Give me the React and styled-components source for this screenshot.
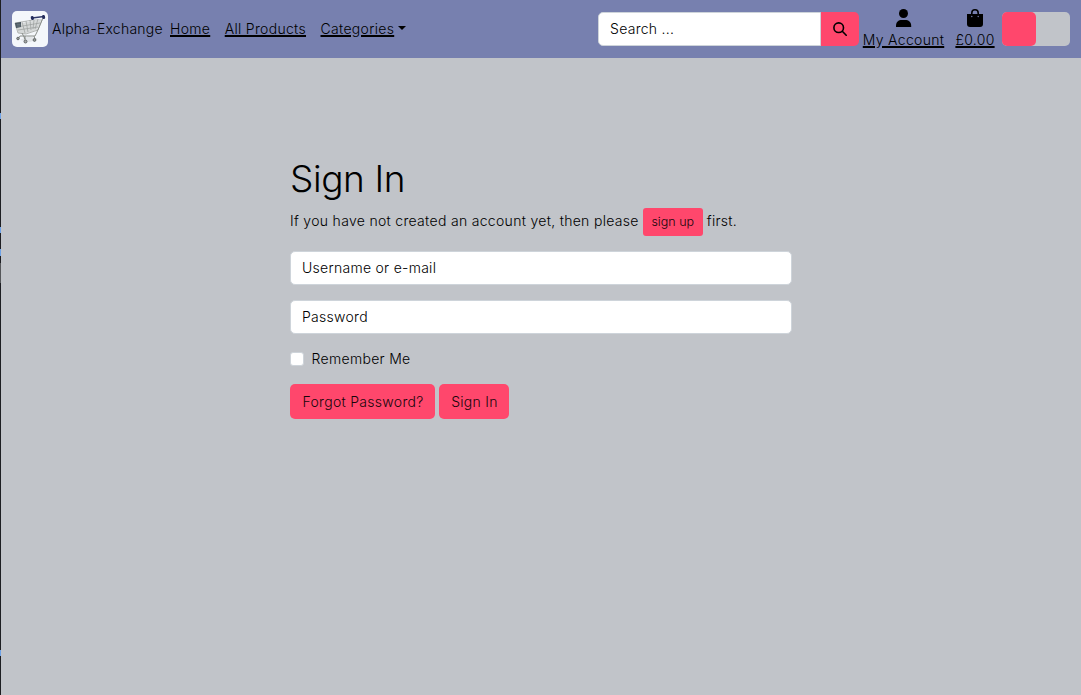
import React from "react";
import styled, { createGlobalStyle } from "styled-components";

const GlobalStyle = createGlobalStyle`
  *, *::before, *::after { box-sizing: border-box; }
  body {
    margin: 0;
    background: #c1c4c9;
    color: #000;
    font: 300 14px/21px Inter, "Liberation Sans", sans-serif;
    letter-spacing: 0.31px;
  }
`;

const Window = styled.div`
  display: flex;
  height: 695px;
  overflow: hidden;
`;

const WindowEdge = styled.div`
  flex: 0 0 1px;
  background: linear-gradient(
    #1d1e22 0 113px, #6fa3e8 113px 119px,
    #1d1e22 119px 227px, #6fa3e8 227px 233px,
    #1d1e22 233px 249px, #6fa3e8 249px 256px,
    #1d1e22 256px 263px, #55575a 263px 283px,
    #1d1e22 283px 650px, #6fa3e8 650px 656px,
    #1d1e22 656px
  );
`;

const Page = styled.div`
  flex: 1;
  min-width: 0;
`;

const Navbar = styled.header`
  display: flex;
  align-items: center;
  height: 58px;
  padding: 0 11px;
  background: #7780af;
  white-space: nowrap;
`;

const Logo = styled.svg`
  flex: none;
  width: 36px;
  height: 36px;
  border-radius: 5px;
  background: #f4f7fb;
`;

const Brand = styled.span`
  width: 111px;
  margin: 0 7px 2px 4px;
  letter-spacing: 0.25px;
`;

const NavLinks = styled.nav`
  display: flex;
  gap: 14.5px;
  margin-bottom: 2px;
`;

const NavLink = styled.a`
  color: inherit;
  text-decoration: underline 2px;
  text-underline-offset: 1px;
`;

const Dropdown = styled.div`
  display: flex;
  align-items: center;
`;

const Caret = styled.span`
  margin: 0 0 1px 4px;
  border: 4.2px solid transparent;
  border-top-color: #000;
  border-bottom: 0;
`;

const Search = styled.form`
  display: flex;
  width: 261px;
  height: 34px;
  margin-left: auto;
`;

const Input = styled.input`
  display: block;
  width: 100%;
  min-width: 0;
  height: 34px;
  padding: 0 11px 2px;
  border: 1px solid #ced4da;
  border-radius: ${(p) => (p.$joined ? "5px 0 0 5px" : "5px")};
  background: #fff;
  font: inherit;
  letter-spacing: 0.28px;
  &::placeholder { color: #000; opacity: 1; }
`;

const SearchButton = styled.button`
  display: flex;
  flex: 0 0 38px;
  align-items: center;
  justify-content: center;
  padding: 0;
  border: 0;
  border-radius: 0 5px 5px 0;
  background: #ff476c;
`;

const IconLink = styled.a`
  display: flex;
  flex-direction: column;
  align-items: center;
  width: ${(p) => p.$width}px;
  height: 42px;
  margin-left: ${(p) => p.$gap}px;
  color: inherit;
  text-decoration: underline 2px;
  text-underline-offset: 1px;
  svg { display: block; flex: none; height: 20px; margin-bottom: 1px; }
`;

const ThemeSwitch = styled.div`
  width: 68px;
  height: 34px;
  margin-left: 7px;
  border-radius: 5px;
  background: #c1c4c9;
  &::before {
    content: "";
    display: block;
    width: 34px;
    height: 34px;
    border-radius: 5px;
    background: #ff476c;
  }
`;

const Main = styled.main`
  width: 502px;
  margin: 99px 0 0 289px;
`;

const Title = styled.h1`
  margin: 0 0 7px;
  font-size: 37px;
  font-weight: 300;
  line-height: 44px;
  letter-spacing: -0.4px;
`;

const Intro = styled.p`
  display: flex;
  align-items: center;
  gap: 4px;
  height: 28px;
  margin: 0 0 15px;
  white-space: nowrap;
  span { padding-bottom: 3px; }
`;

const Button = styled.button`
  height: ${(p) => (p.$small ? "28px" : "35px")};
  width: ${(p) => p.$width}px;
  padding: ${(p) => (p.$small ? "0 0 2px" : "0 0 0 1px")};
  border: 0;
  border-radius: ${(p) => (p.$small ? "3px" : "5px")};
  background: #ff476c;
  color: #16060a;
  font: inherit;
  font-size: ${(p) => (p.$small ? "12.5px" : "14px")};
  letter-spacing: ${(p) => (p.$small ? "0" : "0.3px")};
  white-space: nowrap;
`;

const Form = styled.form`
  display: flex;
  flex-direction: column;
  gap: 15px;
`;

const Remember = styled.label`
  display: flex;
  align-items: center;
  gap: 7.5px;
  height: 21px;
  padding-bottom: 2px;
`;

const Checkbox = styled.input`
  appearance: none;
  width: 14px;
  height: 14px;
  margin: 1px 0 0;
  border: 1px solid #ced4da;
  border-radius: 3px;
  background: #fff;
`;

const Actions = styled.div`
  display: flex;
  gap: 4px;
  margin-top: -1px;
`;

const CartLogo = () => (
  <Logo viewBox="0 0 36 36" fill="none">
    <path d="M8 29l9-4 9 3-8 3z" fill="#e3e6e9" />
    <path d="M4 13l17-3 8 0-4 9-12 4-7-1z" fill="#d5d8d8" />
    <path d="M3 12l18-3 9 0-4 10-12 4-8-1z" stroke="#a4a7a5" strokeWidth=".8" />
    <path d="M5 16l23-4M6 19l20-3M10 11l3 11M14 10l2 11M18 9l1 10M22 9l-1 9M26 8l-3 10" stroke="#9a9e9c" strokeWidth=".7" />
    <path d="M3 12l6-1v5l-5 1z" fill="#44505a" />
    <path d="M4.500 13.200h4M4.500 15h4" stroke="#92a0a6" strokeWidth=".6" />
    <path d="M31 7l-6 14-2 4H8l-2 3M10 22l3 6M22 25l1 3" stroke="#8b8f8b" strokeWidth="1" />
    <path d="M20 7l12-1.500" stroke="#303968" strokeWidth="1.300" />
    <path d="M20.200 6.500l.3 1M31.500 5.500l.2 1" stroke="#252d5c" strokeWidth="3" strokeLinecap="round" />
    <circle cx="6" cy="27.500" r="1.300" fill="#999d9b" stroke="#555b5c" strokeWidth=".8" />
    <circle cx="13.500" cy="30.500" r="1.500" fill="#a9aaa9" stroke="#505557" strokeWidth=".8" />
    <circle cx="22.500" cy="29" r="1.400" fill="#999d9b" stroke="#555b5c" strokeWidth=".8" />
    <path d="M13 25v4" stroke="#70756f" strokeWidth=".8" />
  </Logo>
);

export default function App() {
  return (
    <>
      <GlobalStyle />
      <Window>
        <WindowEdge />
        <Page>
          <Navbar>
            <CartLogo />
            <Brand>Alpha-Exchange</Brand>
            <NavLinks>
              <NavLink>Home</NavLink>
              <NavLink>All Products</NavLink>
              <Dropdown><NavLink>Categories</NavLink><Caret /></Dropdown>
            </NavLinks>
            <Search>
              <Input $joined placeholder="Search ..." />
              <SearchButton type="button" aria-label="Search">
                <svg width="14" height="14" viewBox="0 0 14 14" fill="none" stroke="#000" strokeWidth="1.600" strokeLinecap="round">
                  <circle cx="5.700" cy="5.700" r="4.800" />
                  <path d="M9.300 9.300l3.900 3.900" />
                </svg>
              </SearchButton>
            </Search>
            <IconLink $gap={4} $width={81}>
              <svg width="16" height="20" viewBox="0 0 16 20">
                <circle cx="7.500" cy="5.500" r="4.500" />
                <path d="M0 19v-1.200C0 14 2.500 12 5.800 12h3.400c3.300 0 6 2 6 5.800V19z" />
              </svg>
              My Account
            </IconLink>
            <IconLink $gap={11} $width={40}>
              <svg width="16" height="20" viewBox="0 0 16 20">
                <path d="M0 6h16v10a3 3 0 0 1-3 3H3a3 3 0 0 1-3-3z" />
                <path d="M4.800 8V4.900a3.200 3.200 0 0 1 6.400 0V8" fill="none" stroke="#000" strokeWidth="1.600" />
                <circle cx="4.800" cy="8.500" r=".7" fill="#7780af" />
                <circle cx="11.200" cy="8.500" r=".7" fill="#7780af" />
              </svg>
              £0.00
            </IconLink>
            <ThemeSwitch />
          </Navbar>
          <Main>
            <Title>Sign In</Title>
            <Intro>
              <span>If you have not created an account yet, then please</span>
              <Button $small $width={60}>sign up</Button>
              <span>first.</span>
            </Intro>
            <Form>
              <Input placeholder="Username or e-mail" />
              <Input type="password" placeholder="Password" />
              <Remember><Checkbox type="checkbox" />Remember Me</Remember>
              <Actions>
                <Button type="button" $width={145}>Forgot Password?</Button>
                <Button type="button" $width={70}>Sign In</Button>
              </Actions>
            </Form>
          </Main>
        </Page>
      </Window>
    </>
  );
}
